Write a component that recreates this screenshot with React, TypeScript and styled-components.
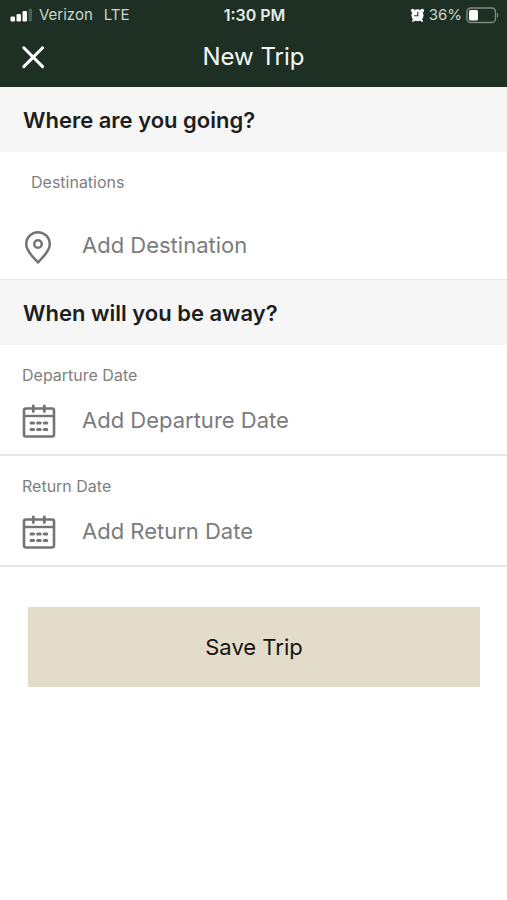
import React from "react";
import styled, { createGlobalStyle } from "styled-components";

const GlobalStyle = createGlobalStyle`
  *, *::before, *::after { box-sizing: border-box; }
  body {
    margin: 0;
    background: #ffffff;
    color: #1e1e1e;
    font-family: Inter, "Liberation Sans", sans-serif;
  }
  button, input { font: inherit; }
`;

const Screen = styled.div`
  min-height: 100vh;
  background: #ffffff;
`;

const TopBar = styled.header`
  background: #1d3023;
  color: #f4f8f4;
`;

const StatusBar = styled.div`
  display: grid;
  grid-template-columns: 1fr auto 1fr;
  align-items: center;
  height: 30px;
  padding: 0 8px 0 10px;
  font-size: 15px;
  line-height: 20px;
  color: #cbd5cc;
`;

const StatusGroup = styled.div<{ $end?: boolean }>`
  display: flex;
  align-items: center;
  justify-content: ${(p) => (p.$end ? "flex-end" : "flex-start")};
  gap: ${(p) => (p.$end ? "4px" : "7px")};
`;

const Network = styled.span`
  margin-left: 4px;
`;

const Clock = styled.time`
  font-size: 16px;
  font-weight: 600;
  color: #e6ede6;
`;

const TitleBar = styled.div`
  display: grid;
  grid-template-columns: 1fr auto 1fr;
  align-items: center;
  height: 57px;
  padding: 0 20px 4px;
`;

const CloseButton = styled.button`
  display: flex;
  justify-self: start;
  padding: 0;
  border: 0;
  background: none;
  color: #ffffff;
  cursor: pointer;
`;

const Title = styled.h1`
  margin: 0;
  font-size: 24px;
  font-weight: 400;
  line-height: 32px;
`;

const SectionHeading = styled.h2`
  margin: 0;
  padding: 17px 23px 16px;
  background: #f6f6f6;
  color: #1e1e1e;
  font-size: 22px;
  font-weight: 600;
  line-height: 32px;
`;

const Field = styled.div<{ $roomy?: boolean }>`
  display: flex;
  flex-direction: column;
  gap: ${(p) => (p.$roomy ? "34px" : "16px")};
  padding: ${(p) => (p.$roomy ? "20px 22px 15px" : "20px 22px 15px")};
  border-bottom: ${(p) => (p.$roomy ? "1px" : "2px")} solid #e8e8e8;
`;

const FieldLabel = styled.label<{ $inset?: boolean }>`
  padding-left: ${(p) => (p.$inset ? "9px" : "0")};
  font-size: 16px;
  line-height: 20px;
  color: #808080;
`;

const FieldRow = styled.div`
  display: grid;
  grid-template-columns: 34px 1fr;
  align-items: center;
  gap: 26px;
  height: 38px;
  color: #747474;
`;

const FieldInput = styled.input`
  width: 100%;
  min-width: 0;
  height: 34px;
  padding: 0;
  border: 0;
  outline: none;
  background: transparent;
  color: #1e1e1e;
  font-size: 22px;

  &::placeholder {
    color: #7c7c7c;
    opacity: 1;
  }
`;

const Actions = styled.div`
  padding: 40px 27px 40px 28px;
`;

const SaveButton = styled.button`
  display: block;
  width: 100%;
  height: 80px;
  padding: 0;
  border: 0;
  background: #e3dccb;
  color: #14140f;
  font-size: 22px;
  cursor: pointer;
`;

const SignalIcon = () => (
  <svg width="22" height="14" viewBox="0 0 22 14" aria-hidden="true">
    <rect x="0.5" y="8.5" width="4.5" height="5" rx="1.2" fill="#fff" />
    <rect x="6.5" y="6" width="4.500" height="7.500" rx="1.2" fill="#fff" />
    <rect x="12.500" y="3" width="4.500" height="10.500" rx="1.2" fill="#fff" />
    <rect x="18.500" y="0.500" width="3.500" height="13" rx="1.2" fill="#486050" />
  </svg>
);

const AlarmIcon = () => (
  <svg width="15" height="15" viewBox="0 0 15 15" aria-hidden="true">
    <g fill="#fff">
      <circle cx="7.500" cy="7.300" r="6" />
      <circle cx="2.800" cy="2.600" r="1.900" />
      <circle cx="12.200" cy="2.600" r="1.900" />
      <path d="M1.800 13.300 3.500 10.500l2 1.500L3.200 14zM13.200 13.300 11.500 10.500l-2 1.500 2.300 2z" />
    </g>
    <path d="M7.800 3.800v4H4.300" fill="none" stroke="#1d3023" strokeWidth="1.100" />
  </svg>
);

const BatteryIcon = () => (
  <svg width="33" height="17" viewBox="0 0 33 17" aria-hidden="true">
    <rect x="1" y="1" width="28.5" height="14.500" rx="3.8" fill="none" stroke="#7e8d82" strokeWidth="1.4" />
    <rect x="3" y="3" width="9" height="10.500" rx="1.5" fill="#fff" />
    <path d="M31 5.700v5c1.700-.5 1.700-4.500 0-5z" fill="#7e8d82" />
  </svg>
);

const CloseIcon = () => (
  <svg width="26" height="26" viewBox="0 0 26 26" aria-hidden="true">
    <path d="m3.800 3.800 18.800 18.800M22.600 3.800 3.800 22.600" fill="none" stroke="currentColor" strokeWidth="3" strokeLinecap="round" />
  </svg>
);

const PinIcon = () => (
  <svg width="34" height="38" viewBox="0 0 34 38" fill="none" stroke="currentColor" strokeWidth="2.500" aria-hidden="true">
    <path d="M16 36.500C12.500 32 4.200 26 4.200 18a11.800 11.800 0 0 1 23.600 0C27.800 26 19.500 32 16 36.500z" strokeLinejoin="round" />
    <circle cx="16" cy="18" r="3.800" />
  </svg>
);

const CalendarIcon = () => (
  <svg width="34" height="38" viewBox="0 0 34 38" fill="none" stroke="currentColor" strokeWidth="2.600" aria-hidden="true">
    <rect x="2" y="7.500" width="30" height="28" rx="2" />
    <path d="M2 15h30" strokeWidth="2.400" />
    <path d="M11.300 5v5.500M22.300 5v5.500" strokeWidth="2.800" strokeLinecap="round" />
    <path d="M9 22h2.600M15.600 22h2.600M22.200 22h2.600M9 28.500h2.600M15.600 28.500h2.600M22.200 28.500h2.600" strokeWidth="3" strokeLinecap="round" />
  </svg>
);

interface TripFieldProps {
  id: string;
  label: string;
  placeholder: string;
  icon: React.ReactNode;
  roomy?: boolean;
}

const TripField = ({ id, label, placeholder, icon, roomy }: TripFieldProps) => (
  <Field $roomy={roomy}>
    <FieldLabel htmlFor={id} $inset={roomy}>{label}</FieldLabel>
    <FieldRow>
      {icon}
      <FieldInput id={id} type="text" placeholder={placeholder} />
    </FieldRow>
  </Field>
);

export default function App() {
  return (
    <Screen>
      <GlobalStyle />
      <TopBar>
        <StatusBar>
          <StatusGroup>
            <SignalIcon />
            <span>Verizon</span>
            <Network>LTE</Network>
          </StatusGroup>
          <Clock>1:30 PM</Clock>
          <StatusGroup $end>
            <AlarmIcon />
            <span>36%</span>
            <BatteryIcon />
          </StatusGroup>
        </StatusBar>
        <TitleBar>
          <CloseButton type="button" aria-label="Close">
            <CloseIcon />
          </CloseButton>
          <Title>New Trip</Title>
        </TitleBar>
      </TopBar>
      <form onSubmit={(e) => e.preventDefault()}>
        <SectionHeading>Where are you going?</SectionHeading>
        <TripField id="destination" label="Destinations" placeholder="Add Destination" icon={<PinIcon />} roomy />
        <SectionHeading>When will you be away?</SectionHeading>
        <TripField id="departure" label="Departure Date" placeholder="Add Departure Date" icon={<CalendarIcon />} />
        <TripField id="return" label="Return Date" placeholder="Add Return Date" icon={<CalendarIcon />} />
        <Actions>
          <SaveButton type="submit">Save Trip</SaveButton>
        </Actions>
      </form>
    </Screen>
  );
}
